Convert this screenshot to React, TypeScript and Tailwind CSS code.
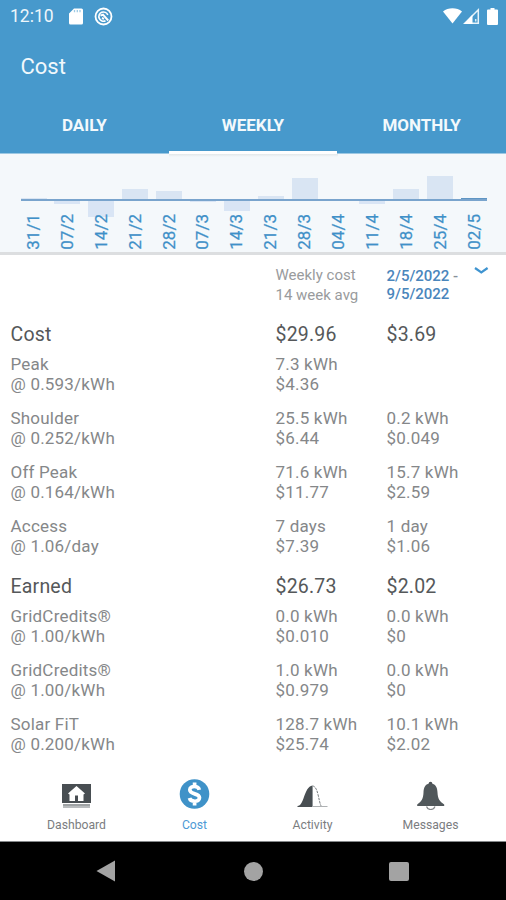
import React from "react";

const bars = [
  { label: "31/1", up: 1, down: 0 },
  { label: "07/2", up: 0, down: 3 },
  { label: "14/2", up: 0, down: 16 },
  { label: "21/2", up: 10, down: 0 },
  { label: "28/2", up: 8, down: 0 },
  { label: "07/3", up: 0, down: 1 },
  { label: "14/3", up: 0, down: 10 },
  { label: "21/3", up: 3, down: 0 },
  { label: "28/3", up: 21, down: 0 },
  { label: "04/4", up: 0, down: 0 },
  { label: "11/4", up: 0, down: 3 },
  { label: "18/4", up: 10, down: 0 },
  { label: "25/4", up: 23, down: 0 },
  { label: "02/5", up: 1, down: 0, selected: true },
];

type Detail = [string, string, string, string, string, string];

const costRows: Detail[] = [
  ["Peak", "@ 0.593/kWh", "7.3 kWh", "$4.36", "", ""],
  ["Shoulder", "@ 0.252/kWh", "25.5 kWh", "$6.44", "0.2 kWh", "$0.049"],
  ["Off Peak", "@ 0.164/kWh", "71.6 kWh", "$11.77", "15.7 kWh", "$2.59"],
  ["Access", "@ 1.06/day", "7 days", "$7.39", "1 day", "$1.06"],
];

const earnedRows: Detail[] = [
  ["GridCredits®", "@ 1.00/kWh", "0.0 kWh", "$0.010", "0.0 kWh", "$0"],
  ["GridCredits®", "@ 1.00/kWh", "1.0 kWh", "$0.979", "0.0 kWh", "$0"],
  ["Solar FiT", "@ 0.200/kWh", "128.7 kWh", "$25.74", "10.1 kWh", "$2.02"],
];

function Chart() {
  return (
    <div className="h-[101px] shrink-0 border-b-[3px] border-[#dcdee0] bg-[#f4f8fb]">
      <div className="mx-auto h-[3px] w-[169px] bg-linear-to-b from-[#e3e8ea] to-[#f4f8fb]" />
      <div className="ml-[20.5px] flex h-[42px] items-end gap-[7.9px]">
        {bars.map((b) => (
          <div
            key={b.label}
            className={b.selected ? "w-[26px] bg-[#5f95c3]" : "w-[26px] bg-[#d9e5f3]"}
            style={{ height: b.up }}
          />
        ))}
      </div>
      <div className="ml-[20.5px] h-[2px] w-[466.500px] bg-[#79a4cd]" />
      <div className="ml-[20.5px] flex gap-[7.9px]">
        {bars.map((b) => (
          <div key={b.label} className="w-[26px]">
            <div className="h-[13px]">
              <div className="bg-[#d9e5f5]" style={{ height: b.down }} />
            </div>
            <div className="relative ml-[2.5px] w-[22px] rotate-180 text-[17px] leading-[20px] [-webkit-text-stroke:0.25px_#3f90c8] text-[#3f90c8] [writing-mode:vertical-rl]">
              {b.label}
            </div>
          </div>
        ))}
      </div>
    </div>
  );
}

const columns = "grid grid-cols-[265px_111px_1fr] pl-[10.5px]";

function Heading({ cells }: { cells: string[] }) {
  return (
    <div className={columns + " h-[34px] text-[19.5px] leading-[34px] tracking-[0.2px] text-[#55585a]"}>
      {cells.map((c) => (
        <span key={c}>{c}</span>
      ))}
    </div>
  );
}

function DetailRow({ row }: { row: Detail }) {
  return (
    <div className={columns + " h-[54px] text-[17px] leading-[20px] tracking-[0.2px] text-[#858789]"}>
      {[0, 2, 4].map((i) => (
        <div key={i}>
          <div>{row[i]}</div>
          <div>{row[i + 1]}</div>
        </div>
      ))}
    </div>
  );
}

function NavItem({ label, active, children }: { label: string; active?: boolean; children: React.ReactNode }) {
  return (
    <div className="flex w-[118px] flex-col items-center">
      <svg width="32" height="32" viewBox="0 0 32 32">{children}</svg>
      <span
        className={
          active
            ? "mt-[7px] text-[12.2px] leading-[17px] text-[#4d9ad5]"
            : "mt-[7px] text-[12.2px] leading-[17px] text-[#7b7d7f]"
        }
      >
        {label}
      </span>
    </div>
  );
}

export default function App() {
  return (
    <div className="flex h-[900px] w-[506px] flex-col overflow-hidden bg-white font-['Roboto',sans-serif]">
      <header className="flex h-[154px] shrink-0 flex-col border-b border-[#9cc8e3] bg-[#4799cc] text-white">
        <div className="flex h-[32px] items-center pl-[10px] pr-[7px]">
          <span className="w-[59px] text-[17.5px] text-[#edf6fb]">12:10</span>
          <svg width="14" height="17" viewBox="0 0 14 17">
            <path d="M5 .5h7.5A1.5 1.5 0 0 1 14 2v13a1.5 1.5 0 0 1-1.5 1.5h-11A1.5 1.5 0 0 1 0 15V5.500z" fill="#fff" />
            <path d="M5.500 2v2.300M8.300 2v2.300M11 2v2.300" stroke="#9ecbe5" strokeWidth="1.300" />
          </svg>
          <svg className="ml-[11px]" width="19" height="19" viewBox="0 0 19 19" fill="none" stroke="#fff">
            <circle cx="9.500" cy="9.500" r="8" strokeWidth="1.800" />
            <path d="M11.500 13.700A4.600 4.600 0 1 1 13.800 8" strokeWidth="1.600" />
            <path d="M6.500 8.700 9 7.600l5.200 5.900M8 11l2 .8" strokeWidth="1.900" />
          </svg>
          <div className="ml-auto flex items-center">
            <svg width="19" height="16" viewBox="0 0 19 16">
              <path d="M0 3.400C5-.8 14-.8 19 3.400L9.500 15.500z" fill="#fff" />
            </svg>
            <svg className="ml-px" width="17" height="17" viewBox="0 0 17 17">
              <path d="M15.300 1.800v13.500H1.800z" fill="none" stroke="#e6f3fa" strokeWidth="1.500" />
              <path d="M9.500 6.500V16H1z" fill="#fff" />
              <path d="M12.700 11v2.500" stroke="#d5edf7" strokeWidth="1.500" />
            </svg>
            <svg className="ml-[7px]" width="12" height="17" viewBox="0 0 12 17">
              <path d="M3.500 0h4v1.500H10A1 1 0 0 1 11 2.500V16a1 1 0 0 1-1 1H1a1 1 0 0 1-1-1V2.500a1 1 0 0 1 1-1h2.500z" fill="#fff" />
            </svg>
          </div>
        </div>
        <div className="flex h-[67px] items-center pl-[20.5px] pt-px text-[22px] text-[#f1f8fc]">Cost</div>
        <nav className="-mb-px grid flex-1 grid-cols-3 text-center text-[17px] font-bold leading-[52px] text-[#f3f9fc]">
          <div>DAILY</div>
          <div className="h-[55px] border-b-[3px] border-white">WEEKLY</div>
          <div>MONTHLY</div>
        </nav>
      </header>
      <Chart />
      <main className="flex flex-1 flex-col">
        <div className={columns + " h-[63px] pt-[10px]"}>
          <span />
          <div className="text-[15px] leading-[20px] text-[#999b9d]">
            <div>Weekly cost</div>
            <div>14 week avg</div>
          </div>
          <div className="flex">
            <div className="w-[86px] pt-[2px] text-[15px] font-medium leading-[18px] text-[#4a86bc]">
              <div>2/5/2022 <span className="text-[#87909a]">-</span></div>
              <div>9/5/2022</div>
            </div>
            <svg className="mt-px" width="17" height="10" viewBox="0 0 17 10">
              <path d="m2 2 6.300 4.500L14.600 2" fill="none" stroke="#3f94d0" strokeWidth="2.200" />
            </svg>
          </div>
        </div>
        <div className="h-[252px]">
          <div className="h-[36px]"><Heading cells={["Cost", "$29.96", "$3.69"]} /></div>
          {costRows.map((r) => <DetailRow key={r[0]} row={r} />)}
        </div>
        <div className="h-[198px]">
          <div className="h-[36px]"><Heading cells={["Earned", "$26.73", "$2.02"]} /></div>
          {earnedRows.map((r, i) => <DetailRow key={i} row={r} />)}
        </div>
      </main>
      <nav className="flex h-[64px] shrink-0 border-b border-[#85888a] pl-[17.5px]">
        <NavItem label="Dashboard">
          <path d="M1 6h29v19H1z" fill="#484e52" />
          <path d="M2 26h27v4H2z" fill="#b9bcbe" />
          <path d="M2 27h27" stroke="#85898b" />
          <path d="M15.500 8 7 15.500l1.500 1V23H14v-5.500h3V23h5.500v-6.500l1.500-1z" fill="#fff" />
        </NavItem>
        <NavItem label="Cost" active>
          <circle cx="15.500" cy="16" r="14.800" fill="#3f92c8" />
          <path d="M20.300 11.800C19.500 7.500 10.800 7.300 10.800 11.800c0 5.200 9.700 3 9.700 8 0 4.700-9 4.400-10 .2M15.600 4.500V9M15.600 23v4.500" fill="none" stroke="#fff" strokeWidth="3.700" />
        </NavItem>
        <NavItem label="Activity">
          <path d="M.5 28c7 0 6-19 15-20.500v21.500H.5z" fill="#484e52" />
          <path d="M15.500 8c6 0 6 17 9 20.500" fill="none" stroke="#787d80" strokeDasharray="2.500 1" />
          <path d="M15.500 28.500h15" stroke="#aeb1b3" />
          <path d="M15.500 8v20" stroke="#92979a" />
        </NavItem>
        <NavItem label="Messages">
          <path d="M11.500 28.500a4.500 4.500 0 0 0 8.500 0" fill="none" stroke="#85898b" strokeWidth="1.200" />
          <circle cx="15.500" cy="5.500" r="1.800" fill="#484e52" />
          <path d="M15.500 5.500C10.200 5.500 8.700 9.500 8.500 14.500c-.2 6-2 9-6.300 12V28h27v-1.500c-4.500-3-6.500-6-6.700-12C22.300 9.500 20.700 5.500 15.500 5.500z" fill="#51585b" />
        </NavItem>
      </nav>
      <footer className="flex h-[58px] shrink-0 items-center bg-black pl-[96px]">
        <svg width="19" height="22" viewBox="0 0 19 22"><path d="M19 .5v21L.5 11z" fill="#a3a3a3" /></svg>
        <div className="ml-[129px] h-[19px] w-[19px] rounded-full bg-[#a3a3a3]" />
        <div className="ml-[126px] h-[19px] w-[20px] rounded-[2px] bg-[#a3a3a3]" />
      </footer>
    </div>
  );
}
